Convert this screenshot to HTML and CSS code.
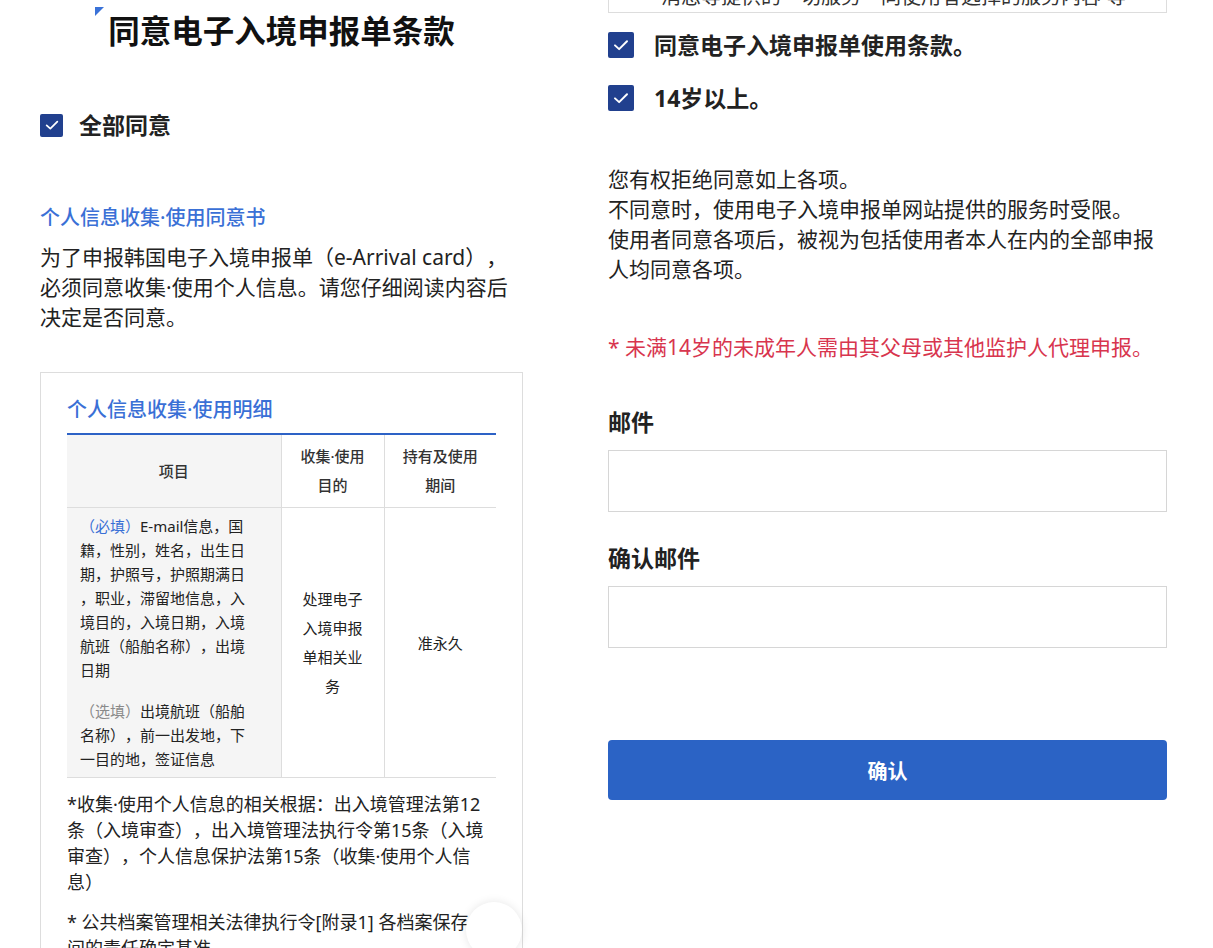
FILE: index.html
```html
<!DOCTYPE html>
<html lang="zh-CN">
<head>
<meta charset="utf-8">
<title>同意电子入境申报单条款</title>
<link rel="stylesheet" href="styles.css">
</head>
<body>
<main class="page">
  <section class="col col-left">
    <h1 class="title"><span class="title-text">同意电子入境申报单条款</span></h1>

    <label class="check check-all">
      <span class="check-box"><svg viewBox="0 0 24 24" width="16" height="16"><polyline points="4,12.5 9.5,17.5 20,7" fill="none" stroke="#fff" stroke-width="2.6" stroke-linecap="round" stroke-linejoin="round"/></svg></span>
      <span>全部同意</span>
    </label>

    <h2 class="sub-title">个人信息收集·使用同意书</h2>
    <p class="desc">为了申报韩国电子入境申报单（e-Arrival card），必须同意收集·使用个人信息。请您仔细阅读内容后决定是否同意。</p>

    <div class="panel">
      <h3 class="panel-title">个人信息收集·使用明细</h3>
      <table class="detail">
        <colgroup><col class="c1"><col class="c2"><col class="c3"></colgroup>
        <thead>
          <tr><th class="first">项目</th><th>收集·使用<br>目的</th><th>持有及使用<br>期间</th></tr>
        </thead>
        <tbody>
          <tr>
            <td class="first items">
              <p><span class="req">（必填）</span>E-mail信息，国<br>籍，性别，姓名，出生日<br>期，护照号，护照期满日<br>，职业，滞留地信息，入<br>境目的，入境日期，入境<br>航班（船舶名称），出境<br>日期</p>
              <p><span class="opt">（选填）</span>出境航班（船舶<br>名称），前一出发地，下<br>一目的地，签证信息</p>
            </td>
            <td class="purpose">处理电子入境申报单相关业务</td>
            <td class="period">准永久</td>
          </tr>
        </tbody>
      </table>
      <p class="note">*收集·使用个人信息的相关根据：出入境管理法第12<br>条（入境审查），出入境管理法执行令第15条（入境<br>审查），个人信息保护法第15条（收集·使用个人信<br>息）</p>
      <p class="note">* 公共档案管理相关法律执行令[附录1] 各档案保存<br>间的责任确定基准</p>
    </div>
  </section>

  <section class="col col-right">
    <div class="terms-box">消息等提供的一切服务一同使用者选择的服务内容 等</div>

    <label class="check check-lg first-check">
      <span class="check-box"><svg viewBox="0 0 24 24" width="18" height="18"><polyline points="4,12.5 9.5,17.5 20,7" fill="none" stroke="#fff" stroke-width="2.6" stroke-linecap="round" stroke-linejoin="round"/></svg></span>
      <span>同意电子入境申报单使用条款。</span>
    </label>
    <label class="check check-lg second-check">
      <span class="check-box"><svg viewBox="0 0 24 24" width="18" height="18"><polyline points="4,12.5 9.5,17.5 20,7" fill="none" stroke="#fff" stroke-width="2.6" stroke-linecap="round" stroke-linejoin="round"/></svg></span>
      <span>14岁以上。</span>
    </label>

    <p class="info">您有权拒绝同意如上各项。<br>不同意时，使用电子入境申报单网站提供的服务时受限。<br>使用者同意各项后，被视为包括使用者本人在内的全部申报人均同意各项。</p>

    <p class="warn">* 未满14岁的未成年人需由其父母或其他监护人代理申报。</p>

    <label class="field-label label-email" for="email">邮件</label>
    <input class="field" id="email" type="text">

    <label class="field-label label-confirm" for="email2">确认邮件</label>
    <input class="field" id="email2" type="text">

    <button class="submit" type="button">确认</button>
  </section>

  <button class="float-btn" type="button" aria-label="top"></button>
</main>
</body>
</html>
```

FILE: styles.css
```css
* { box-sizing: border-box; }

html, body {
  margin: 0;
  padding: 0;
  background: #fff;
}

body {
  font-family: "Noto Sans", "Noto Sans CJK SC", sans-serif;
  color: #222;
  text-spacing-trim: space-all;
}

.page {
  position: relative;
  height: 948px;
  overflow: hidden;
  display: grid;
  grid-template-columns: 483px 559px;
  column-gap: 85px;
  padding-left: 40px;
  align-items: start;
}

.col { display: flex; flex-direction: column; }

/* ---------- left column ---------- */
.title {
  margin: 11px 0 0;
  font-size: 31.5px;
  line-height: 40px;
  font-weight: 700;
  text-align: center;
  color: #111;
}

.title-text {
  position: relative;
  display: inline-block;
}

.title-text::before {
  content: "";
  position: absolute;
  left: -13px;
  top: -4px;
  border-top: 9px solid #3a72d8;
  border-right: 9px solid transparent;
}

.check {
  display: flex;
  align-items: center;
  font-weight: 700;
  color: #222;
}

.check-box {
  display: flex;
  align-items: center;
  justify-content: center;
  background: #21408e;
  border-radius: 2px;
  flex: none;
}

.check-all {
  margin-top: 59px;
  gap: 16px;
  font-size: 23px;
  line-height: 30px;
}

.check-all .check-box { width: 23px; height: 23px; }

.sub-title {
  margin: 63px 0 0;
  font-size: 20px;
  line-height: 30px;
  font-weight: 500;
  color: #3a70d6;
}

.desc {
  margin: 9px 0 0;
  font-size: 21px;
  line-height: 30px;
  color: #222;
}

.panel {
  margin-top: 40px;
  border: 1px solid #ddd;
  padding: 22px 26px 0;
  height: 700px;
}

.panel-title {
  margin: 0 0 8px;
  font-size: 20px;
  line-height: 30px;
  font-weight: 500;
  color: #3a70d6;
}

.detail {
  width: 100%;
  table-layout: fixed;
  border-collapse: collapse;
  border-top: 2px solid #2d62c6;
  font-size: 15px;
  color: #222;
}

.detail .c1 { width: 214px; }
.detail .c2 { width: 103px; }
.detail .c3 { width: 112px; }

.detail th,
.detail td {
  border: 1px solid #ddd;
  vertical-align: middle;
  text-align: center;
}

.detail th:first-child,
.detail td:first-child { border-left: none; }
.detail th:last-child,
.detail td:last-child { border-right: none; }

.detail th {
  height: 72px;
  padding: 7px 6px;
  line-height: 29px;
  font-weight: 500;
  color: #333;
}

.detail .first { background: #f5f5f5; }

.detail .items {
  text-align: left;
  padding: 6px 10px 6px 13px;
  line-height: 24px;
  white-space: nowrap;
}

.detail .items p { margin: 0; }
.detail .items p + p { margin-top: 17px; }

.req { color: #3a70d6; }
.opt { color: #8a8a8a; }

.detail .purpose {
  padding: 0 18px;
  line-height: 29px;
}

.detail .period { padding: 0 8px; }

.note {
  margin: 13px 0 0;
  font-size: 18px;
  line-height: 26px;
  white-space: nowrap;
  color: #222;
}

.note + .note { margin-top: 14px; }

.float-btn {
  position: absolute;
  left: 466px;
  top: 902px;
  width: 56px;
  height: 56px;
  border-radius: 50%;
  border: none;
  background: #fff;
  box-shadow: 0 0 10px rgba(0, 0, 0, 0.1);
  padding: 0;
}

/* ---------- right column ---------- */
.terms-box {
  margin-top: -47px;
  height: 60px;
  border: 1px solid #ddd;
  padding: 0 20px 0 52px;
  display: flex;
  align-items: flex-end;
  font-size: 20px;
  line-height: 30px;
  color: #333;
  overflow: hidden;
}

.check-lg {
  gap: 20px;
  font-size: 23px;
  line-height: 30px;
}

.check-lg .check-box { width: 26px; height: 26px; }

.first-check { margin-top: 17px; }
.second-check { margin-top: 23px; }

.info {
  margin: 51px 0 0;
  font-size: 21px;
  line-height: 30px;
  color: #222;
}

.warn {
  margin: 48px 0 0;
  font-size: 21px;
  line-height: 30px;
  color: #d8354e;
}

.field-label {
  display: block;
  font-size: 23px;
  line-height: 30px;
  font-weight: 700;
  color: #222;
}

.label-email { margin-top: 45px; }
.label-confirm { margin-top: 31px; }

.field {
  display: block;
  width: 100%;
  height: 62px;
  margin-top: 13px;
  border: 1px solid #d6d6d6;
  border-radius: 0;
  background: #fff;
  font-size: 20px;
  padding: 0 16px;
  font-family: inherit;
}

.submit {
  display: block;
  width: 100%;
  height: 60px;
  margin-top: 92px;
  border: none;
  border-radius: 4px;
  background: #2b63c5;
  color: #fff;
  font-family: inherit;
  font-size: 20px;
  font-weight: 700;
}
```
